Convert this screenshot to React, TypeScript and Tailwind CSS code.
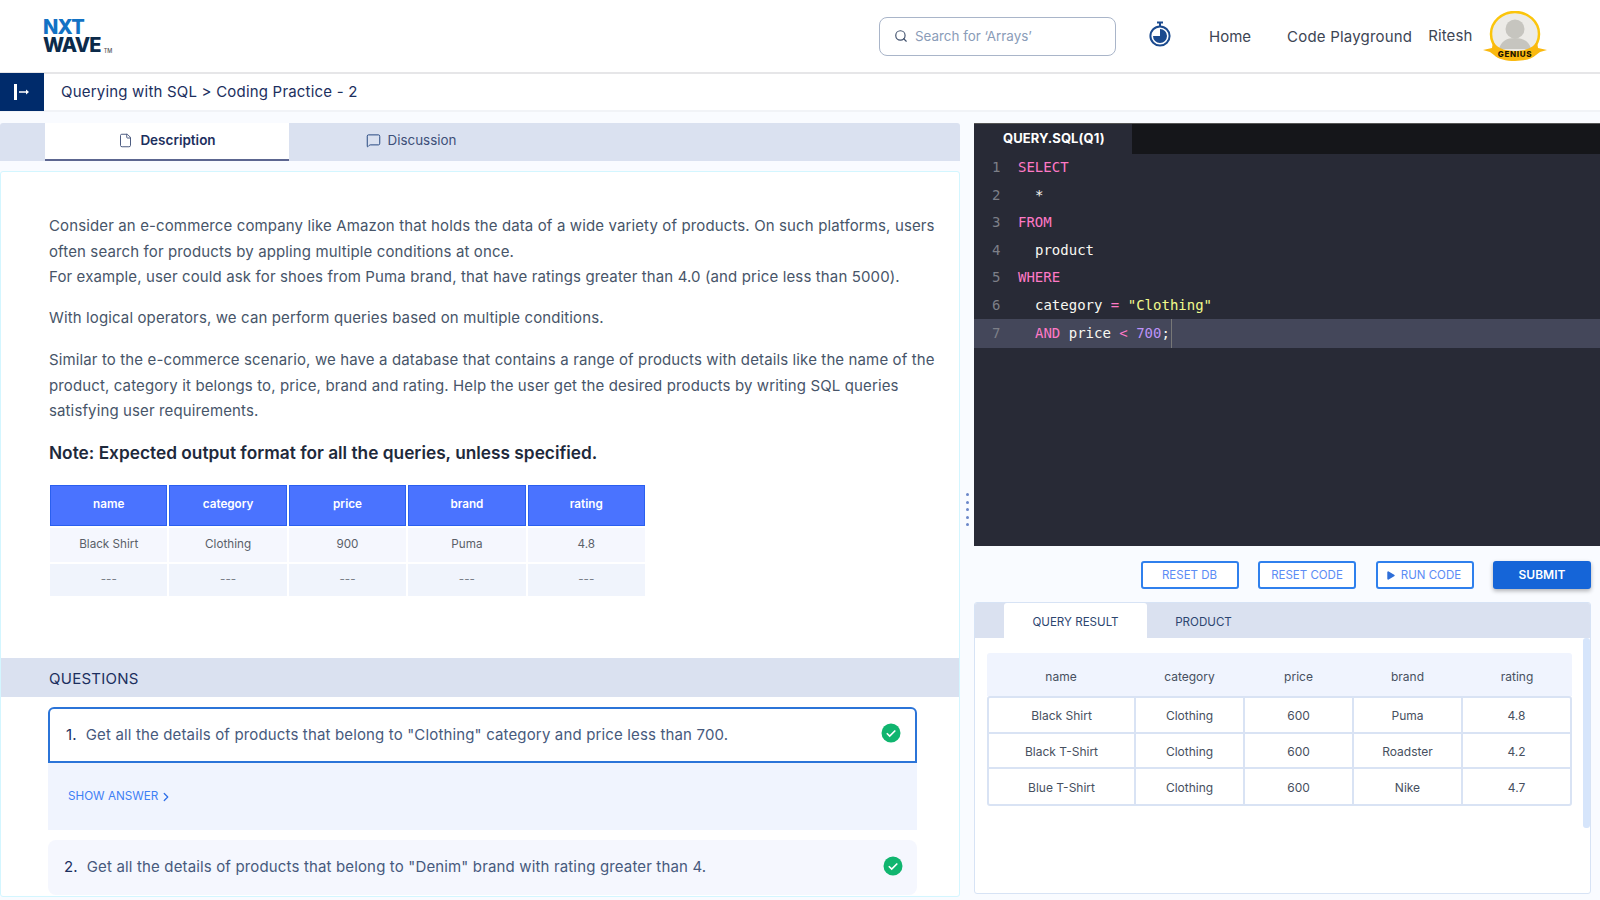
import { ChevronRight, File, MessageSquare, Play, Search } from 'lucide-react'

const sampleCols = ['name', 'category', 'price', 'brand', 'rating']
const sampleRow = ['Black Shirt', 'Clothing', '900', 'Puma', '4.8']

const resultRows = [
  ['Black Shirt', 'Clothing', '600', 'Puma', '4.8'],
  ['Black T-Shirt', 'Clothing', '600', 'Roadster', '4.2'],
  ['Blue T-Shirt', 'Clothing', '600', 'Nike', '4.7'],
]

function Logo() {
  return (
    <div className="ml-[43px] flex w-[76px] flex-col font-['Inter',sans-serif] font-extrabold leading-none">
      <span className="h-[18px] text-[20px] leading-[18px] tracking-[-0.7px] text-[#1272c4]">NXT</span>
      <div className="flex h-[19px] items-end">
        <span className="text-[20px] leading-[19px] tracking-[-0.8px] text-[#0b2a4a]">WAVE</span>
        <span className="ml-[3px] text-[5.5px] font-medium leading-[8px] text-[#555]">TM</span>
      </div>
    </div>
  )
}

function TimerIcon() {
  return (
    <svg width="22" height="26" viewBox="0 0 22 26">
      <rect x="8" y="0.5" width="6" height="2" fill="#1b4a8e" />
      <rect x="10" y="2" width="2" height="3" fill="#1b4a8e" />
      <circle cx="11" cy="15" r="9.6" fill="none" stroke="#1b4a8e" strokeWidth="2" />
      <path d="M11 15V8a7 7 0 1 1-7 7z" fill="#1b4a8e" />
    </svg>
  )
}

function GeniusBadge() {
  return (
    <svg width="66" height="52" viewBox="0 0 66 52">
      <ellipse cx="33" cy="23" rx="24" ry="22" fill="#ecebe7" stroke="#fbc50c" strokeWidth="2.5" />
      <circle cx="33" cy="18" r="9.5" fill="#c6c5bf" />
      <path d="M17 38c2-8 8-11 16-11s14 3 16 11z" fill="#c6c5bf" />
      <path d="M1 39l9-2 1-7c2 6 11 10 22 10s20-4 22-10l1 7 9 2-7 2-4 3c-4 4-12 6-21 6s-17-2-21-6l-4-3z" fill="#fab90f" />
      <text x="33" y="46" textAnchor="middle" fontSize="8" fontWeight="800" fontFamily="Inter, sans-serif" letterSpacing="0.7" fill="#1a1400">
        GENIUS
      </text>
    </svg>
  )
}

function CheckBadge() {
  return (
    <svg width="20" height="20" viewBox="0 0 20 20" className="mb-[4px]">
      <circle cx="10" cy="10" r="9.5" fill="#10b56f" />
      <path d="M5.8 10.2l2.9 2.9 5.6-5.6" fill="none" stroke="#fff" strokeWidth="1.6" />
    </svg>
  )
}

function Header() {
  return (
    <header className="flex h-[74px] shrink-0 items-center border-b-2 border-[#e6e6e8] bg-white">
      <Logo />
      <div className="ml-[760px] flex h-[39px] w-[237px] items-center gap-[7px] rounded-lg border border-[#a9b5c9] px-[14px]">
        <Search size={14} strokeWidth={2} className="text-[#42526e]" />
        <span className="text-[13.4px] text-[#8a9cb8]">Search for ‘Arrays’</span>
      </div>
      <div className="mb-[4px] ml-[33px] flex w-[22px]">
        <TimerIcon />
      </div>
      <span className="ml-[38px] mt-[3px] text-[15px] text-[#3d4554]">Home</span>
      <span className="ml-[36px] mt-[3px] text-[15px] tracking-[0.2px] text-[#3d4554]">Code Playground</span>
      <span className="ml-[16px] mt-[1px] text-[15px] tracking-[0.1px] text-[#3d4554]">Ritesh</span>
      <div className="ml-[10px] mt-[1px]">
        <GeniusBadge />
      </div>
    </header>
  )
}

function SubBar() {
  return (
    <div className="flex h-[38px] shrink-0 items-center border-b-2 border-[#f1f3f7] bg-white">
      <button className="flex h-[38px] w-[44px] items-center justify-center bg-[#002b6b]">
        <svg width="18" height="18" viewBox="0 0 18 18">
          <rect x="1" y="1" width="3" height="16" fill="#fff" />
          <path d="M6 9h8" stroke="#fff" strokeWidth="1.5" />
          <path d="M13 6.5L16 9l-3 2.5z" fill="#fff" />
        </svg>
      </button>
      <span className="ml-[17px] mt-[1px] text-[15px] tracking-[0.2px] text-[#1c2f5e]">Querying with SQL &gt; Coding Practice - 2</span>
    </div>
  )
}

function LeftPanel() {
  return (
    <section className="flex w-[960px] shrink-0 flex-col">
      <div className="flex h-[38px] rounded-t-[3px] bg-[#dae1f0]">
        <div className="ml-[45px] flex w-[244px] items-center justify-center gap-[7px] border-b-2 border-[#5c6690] bg-white pb-[2px] text-[13.5px] font-semibold text-[#1c2f5e]">
          <File size={15} strokeWidth={1.5} className="text-[#42527a]" />
          Description
        </div>
        <div className="flex w-[244px] items-center justify-center gap-[7px] pb-[3px] text-[13.4px] text-[#3d4f78]">
          <MessageSquare size={15} strokeWidth={1.5} className="text-[#1c3f7a]" />
          Discussion
        </div>
      </div>

      <div className="mt-[10px] h-[726px] overflow-hidden rounded-[3px] border border-[#d3f6ff] bg-white">
        <div className="h-[486px] pl-[48px] pr-[20px] pt-[41px] text-[15px] leading-[25.6px] tracking-[0.125px] text-[#475569]">
          <p>
            Consider an e-commerce company like Amazon that holds the data of a wide variety of products. On such platforms, users
            <br />
            often search for products by appling multiple conditions at once.
            <br />
            For example, user could ask for shoes from Puma brand, that have ratings greater than 4.0 (and price less than 5000).
          </p>
          <p className="mt-[15px]">With logical operators, we can perform queries based on multiple conditions.</p>
          <p className="mt-[16.6px]">
            Similar to the e-commerce scenario, we have a database that contains a range of products with details like the name of the
            <br />
            product, category it belongs to, price, brand and rating. Help the user get the desired products by writing SQL queries
            <br />
            satisfying user requirements.
          </p>
          <h3 className="mt-[16px] text-[17.3px] font-semibold leading-[26px] tracking-normal text-[#1e293b]">Note: Expected output format for all the queries, unless specified.</h3>

          <div className="ml-[1px] mt-[19px] grid w-[595px] grid-cols-5 gap-[2px] text-center text-[11.7px]">
            {sampleCols.map((col) => (
              <div key={col} className="flex h-[41px] items-center justify-center border border-[#2a5fef] bg-[#4a73ff] font-semibold tracking-normal text-white">
                {col}
              </div>
            ))}
            {sampleRow.map((cell) => (
              <div key={cell} className="flex h-[34px] items-center justify-center bg-[#f5f7fe] tracking-normal text-[#5a5f69]">
                {cell}
              </div>
            ))}
            {sampleCols.map((col) => (
              <div key={col} className="flex h-[32px] items-center justify-center bg-[#f0f4fc] tracking-normal text-[#7a7f88]">
                ---
              </div>
            ))}
          </div>
        </div>

        <div className="flex h-[39px] items-center bg-[#dae1f0] pl-[48px] pt-[3px] text-[15px] tracking-[0.25px] text-[#1c2f5e]">QUESTIONS</div>

        <div className="ml-[47px] mt-[10px] flex h-[56px] w-[869px] items-center justify-between rounded-t-[6px] border-2 border-[#2b74d8] bg-white pl-[16px] pr-[14px] text-[15px] tracking-[0.15px] text-[#475a7d]">
          <span>
            <span className="mr-[9px] text-[#1c2f5e]">1.</span>Get all the details of products that belong to "Clothing" category and price less than 700.
          </span>
          <CheckBadge />
        </div>
        <div className="ml-[47px] flex h-[67px] w-[869px] items-center gap-[1px] bg-[#f0f4fe] pl-[20px] text-[11.7px] text-[#3f80f5]">
          SHOW ANSWER
          <ChevronRight size={14} strokeWidth={2.2} className="text-[#2f6fe8]" />
        </div>
        <div className="ml-[47px] mt-[10px] flex h-[55px] w-[869px] items-center justify-between rounded-[8px] bg-[#f5f7fe] pl-[16px] pr-[14px] text-[15px] tracking-[0.15px] text-[#475a7d]">
          <span>
            <span className="mr-[9px] text-[#1c2f5e]">2.</span>Get all the details of products that belong to "Denim" brand with rating greater than 4.
          </span>
          <CheckBadge />
        </div>
      </div>
    </section>
  )
}

function Kw({ children }: { children: string }) {
  return <span className="text-[#ff79c6]">{children}</span>
}

function Editor() {
  const lines = [
    <Kw key="s">SELECT</Kw>,
    <span key="a" className="pl-[17px]">*</span>,
    <Kw key="f">FROM</Kw>,
    <span key="p" className="pl-[17px]">product</span>,
    <Kw key="w">WHERE</Kw>,
    <span key="c" className="pl-[17px]">
      category <Kw>=</Kw> <span className="text-[#f1fa8c]">"Clothing"</span>
    </span>,
    <span key="n" className="pl-[17px]">
      <Kw>AND</Kw> price <Kw>&lt;</Kw> <span className="text-[#bd93f9]">700</span>;
    </span>,
  ]
  return (
    <div className="h-[423px] border-t border-[#555] bg-[#282a36]">
      <div className="flex h-[30px] bg-[#15161a]">
        <div className="flex w-[158px] items-center bg-[#282a36] pl-[29px] text-[13px] font-bold tracking-[0.1px] text-white">QUERY.SQL(Q1)</div>
      </div>
      <div className="font-['DejaVu_Sans_Mono',monospace] text-[14px] text-[#f8f8f2]">
        {lines.map((line, i) => (
          <div key={i} className={i === 6 ? 'flex h-[28.5px] items-center bg-[#44475a]' : 'flex h-[27.5px] items-center'}>
            <span className="w-[44px] shrink-0 pl-[18px] text-[#7d7f88]">{i + 1}</span>
            <span className={i === 6 ? 'flex h-full items-center border-r border-[#777] pr-px' : ''}>{line}</span>
          </div>
        ))}
      </div>
    </div>
  )
}

function OutlineButton({ label, play }: { label: string; play?: boolean }) {
  return (
    <button className="flex h-[28px] w-[98px] items-center justify-center gap-[5px] rounded-[3px] border-2 border-[#2f80ed] bg-white pt-[1px] text-[11.5px] text-[#5b8cf5]">
      {play && <Play size={11} fill="#2f6fd8" strokeWidth={0} className="ml-[-3px]" />}
      {label}
    </button>
  )
}

function ResultPanel() {
  return (
    <div className="relative mt-[13px] h-[292px] overflow-hidden rounded-[3px] border border-[#d7e3f5] bg-white">
      <div className="flex h-[35px] bg-[#dae1f0] pl-[29px] pt-[5px] text-[11.6px] text-[#2d4670]">
        <div className="mt-[-5px] flex w-[143px] items-center justify-center rounded-t-[3px] bg-white pt-[5px]">QUERY RESULT</div>
        <div className="flex w-[113px] items-center justify-center">PRODUCT</div>
      </div>
      <div className="absolute right-0 top-[35px] h-[190px] w-[7px] rounded-[3px] bg-[#d6e5fb]" />
      <div className="ml-[12px] mt-[15px] w-[585px] text-center text-[12px] text-[#475060]">
        <div className="grid h-[43px] grid-cols-[148px_109px_109px_109px_110px] items-center rounded-t-[3px] bg-[#f0f4fe] pt-[4px]">
          {sampleCols.map((col) => (
            <div key={col}>{col}</div>
          ))}
        </div>
        <div className="rounded-[3px] border-2 border-[#d9e3f4]">
          {resultRows.map((row, r) => (
            <div key={row[0]} className={r < 2 ? 'grid h-[35.5px] grid-cols-[147px_109px_109px_109px_107px] items-stretch border-b-2 border-[#d9e3f4]' : 'grid h-[35px] grid-cols-[147px_109px_109px_109px_107px] items-stretch'}>
              {row.map((cell, c) => (
                <div key={c} className={c < 4 ? 'flex items-center justify-center border-r-2 border-[#d9e3f4] pt-[3px]' : 'flex items-center justify-center pt-[3px]'}>
                  {cell}
                </div>
              ))}
            </div>
          ))}
        </div>
      </div>
    </div>
  )
}

function RightPanel() {
  return (
    <section className="ml-[14px] flex w-[617px] shrink-0 flex-col">
      <div className="w-[626px]">
        <Editor />
      </div>
      <div className="mt-[15px] flex justify-end gap-[19.5px]">
        <OutlineButton label="RESET DB" />
        <OutlineButton label="RESET CODE" />
        <OutlineButton label="RUN CODE" play />
        <button className="h-[28px] w-[98px] rounded-[3px] bg-[#1565d8] text-[12px] font-semibold text-white shadow-[0_2px_4px_rgba(0,0,0,0.3)]">SUBMIT</button>
      </div>
      <ResultPanel />
    </section>
  )
}

export default function App() {
  return (
    <div className="flex h-[900px] w-[1600px] flex-col overflow-hidden bg-[#f9fbff] font-['Inter',sans-serif]">
      <Header />
      <SubBar />
      <main className="relative flex pt-[11px]">
        <LeftPanel />
        <RightPanel />
        <div className="absolute left-[966px] top-[381px] flex flex-col gap-[4.6px]">
          <span className="h-[3px] w-[3px] rounded-full bg-[#6b87c9]" />
          <span className="h-[3px] w-[3px] rounded-full bg-[#6b87c9]" />
          <span className="h-[3px] w-[3px] rounded-full bg-[#6b87c9]" />
          <span className="h-[3px] w-[3px] rounded-full bg-[#6b87c9]" />
          <span className="h-[3px] w-[3px] rounded-full bg-[#6b87c9]" />
        </div>
      </main>
    </div>
  )
}
